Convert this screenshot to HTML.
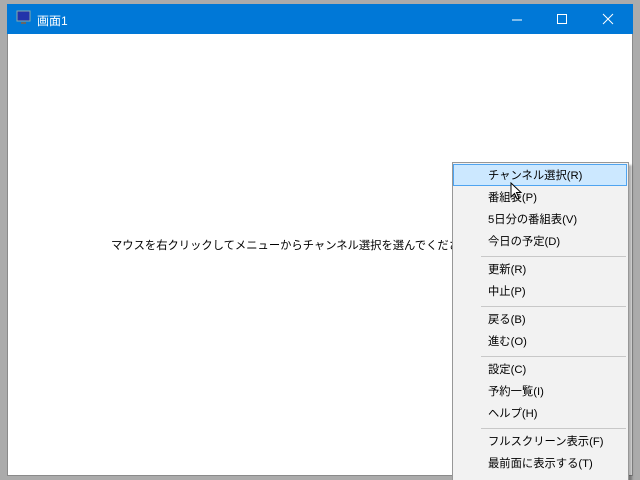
<!DOCTYPE html><html><head><meta charset="utf-8"><style>
html,body{margin:0;width:640px;height:480px;overflow:hidden}
body{background:#ababab;position:relative;font-family:"Liberation Sans","Noto Sans CJK JP",sans-serif;font-size:11.3px}
.win{position:absolute;left:7px;top:4px;width:626px;height:472px;background:#fff;border:1px solid #8a8a8a;box-sizing:border-box}
.tb{position:absolute;left:-1px;top:-1px;right:-1px;height:30px;background:#0078d7;color:#fff}
.menu{position:absolute;left:452px;top:162px;width:177px;height:330px;background:#f2f2f2;border:1px solid #979797;box-sizing:border-box;box-shadow:3px 3px 2px rgba(0,0,0,.3)}
.it{position:absolute;left:35px;height:22px;line-height:24px;color:#000;white-space:nowrap}
.sep{position:absolute;left:28px;right:2px;height:1px;background:#c8c8c8}
</style></head><body>
<div class="win">
<div class="tb">
<svg style="position:absolute;left:9px;top:6px" width="16" height="16"><rect x="1" y="1" width="13" height="10" fill="#2233aa" stroke="#8aa" /><rect x="5" y="12" width="5" height="2" fill="#666"/></svg>
<span style="position:absolute;left:30px;top:8px;font-size:12px">画面1</span>
<svg style="position:absolute;left:500px;top:8px" width="120" height="14"><line x1="5" y1="8" x2="15" y2="8" stroke="#fff"/><rect x="50.5" y="2.5" width="9" height="9" fill="none" stroke="#fff"/><path d="M96 2L106 12M106 2L96 12" stroke="#fff"/></svg>
</div>
<div style="position:absolute;left:103px;top:232px;white-space:nowrap">マウスを右クリックしてメニューからチャンネル選択を選んでください</div>
</div>
<div class="menu">
<div style="position:absolute;left:0;top:1px;width:174px;height:22px;background:#cce8ff;border:1px solid #4fa4f0;box-sizing:border-box"></div>
<div class="it" style="top:1px">チャンネル選択(R)</div>
<div class="it" style="top:23px">番組表(P)</div>
<div class="it" style="top:45px">5日分の番組表(V)</div>
<div class="it" style="top:67px">今日の予定(D)</div>
<div class="sep" style="top:93px"></div>
<div class="it" style="top:95px">更新(R)</div>
<div class="it" style="top:117px">中止(P)</div>
<div class="sep" style="top:143px"></div>
<div class="it" style="top:145px">戻る(B)</div>
<div class="it" style="top:167px">進む(O)</div>
<div class="sep" style="top:193px"></div>
<div class="it" style="top:195px">設定(C)</div>
<div class="it" style="top:217px">予約一覧(I)</div>
<div class="it" style="top:239px">ヘルプ(H)</div>
<div class="sep" style="top:265px"></div>
<div class="it" style="top:267px">フルスクリーン表示(F)</div>
<div class="it" style="top:289px">最前面に表示する(T)</div>
</div>
<svg style="position:absolute;left:510px;top:182px" width="14" height="20"><path d="M1 1L1 15L4.5 11.5L7 17L9 16L6.5 10.5L11 10.5Z" fill="#fff" stroke="#000"/></svg>
</body></html>
